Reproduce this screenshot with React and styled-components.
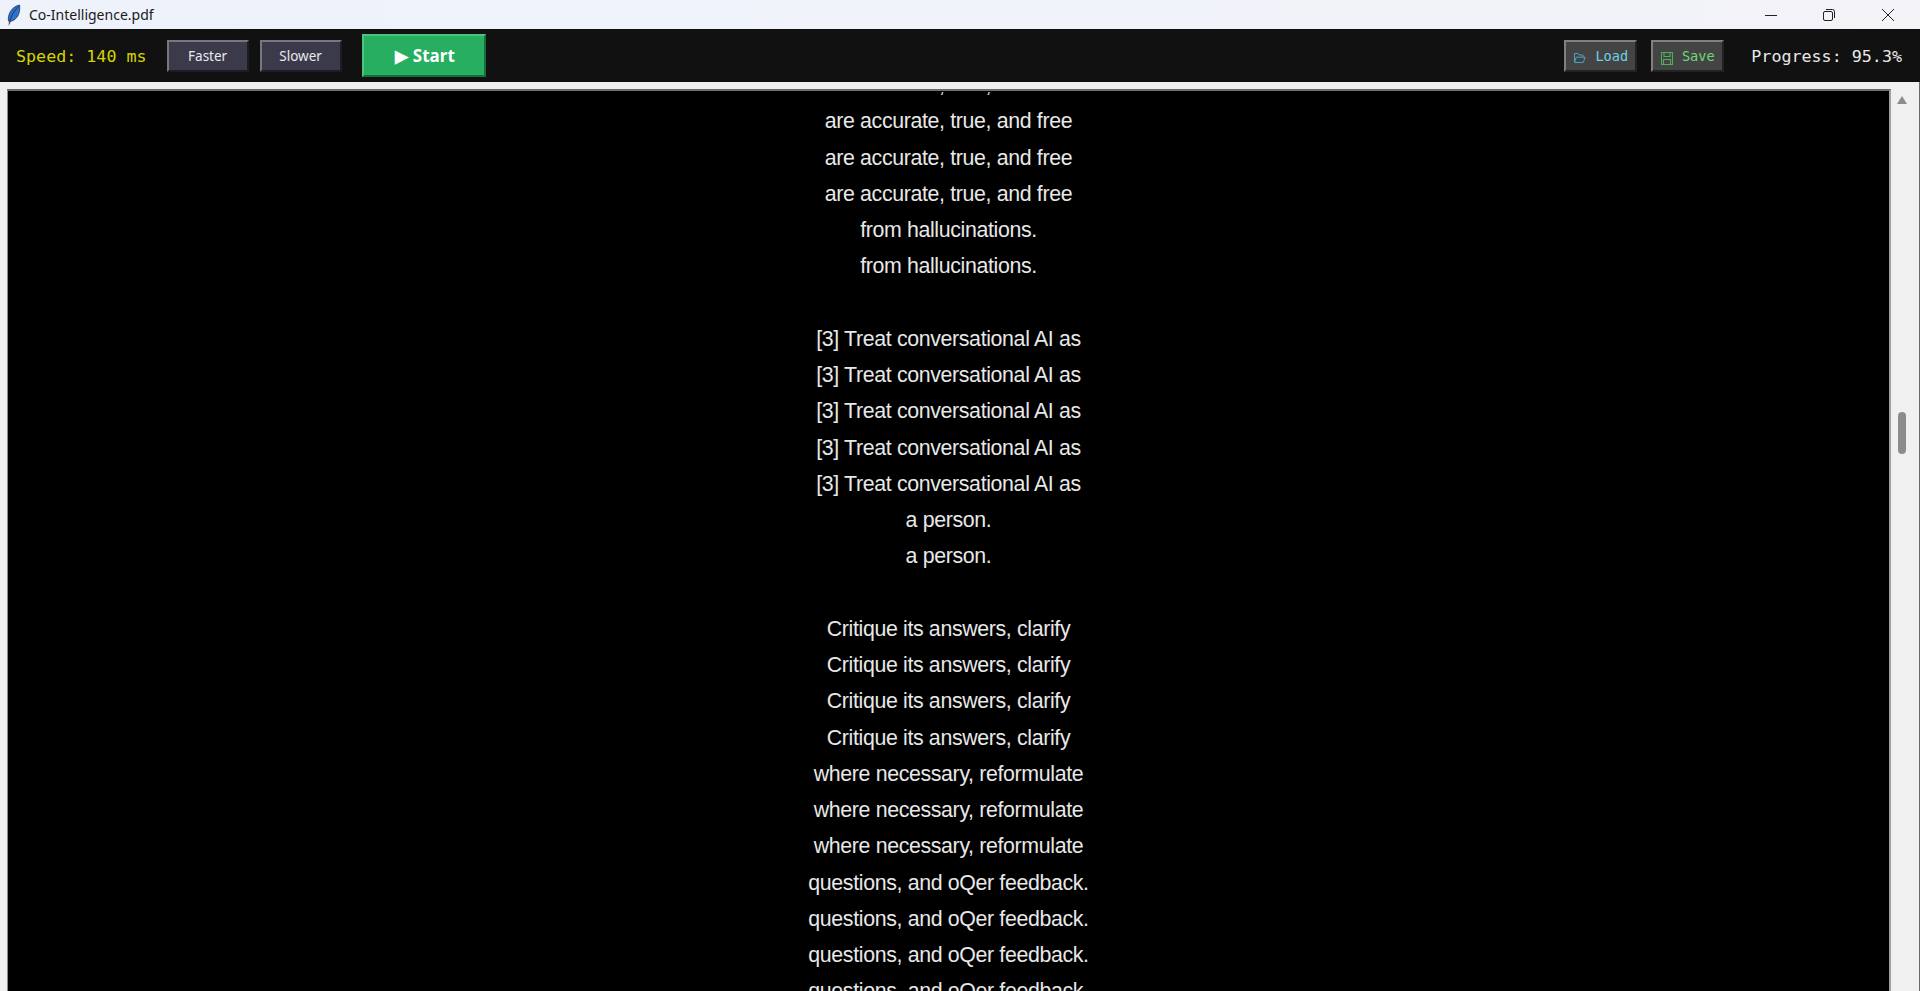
import React from "react";
import styled, { createGlobalStyle } from "styled-components";

const Global = createGlobalStyle`
  html, body { margin: 0; padding: 0; height: 100%; overflow: hidden; background: #f0f0f0; }
  #root { height: 100%; }
`;

const Shell = styled.div`
  height: 991px;
  display: flex;
  flex-direction: column;
  overflow: hidden;
`;

const TitleBar = styled.header`
  height: 29px;
  flex: none;
  display: flex;
  align-items: center;
  padding-left: 5px;
  background: linear-gradient(90deg, #edf2fb 0%, #f0f3fa 50%, #f3f3f8 100%);
`;

const AppName = styled.span`
  margin-left: 6px;
  font: 14px "Noto Sans", "Open Sans", sans-serif;
  color: #1a1a1a;
`;

const WindowControls = styled.div`
  margin-left: auto;
  display: flex;
  height: 100%;
  padding-right: 3px;
`;

const WindowButton = styled.div`
  width: 58.5px;
  display: flex;
  align-items: center;
  justify-content: center;
  color: #222;
`;

const Toolbar = styled.div`
  height: 53px;
  flex: none;
  display: flex;
  align-items: center;
  padding: 0 18px 0 16px;
  background: #111111;
`;

const MonoLabel = styled.span`
  font: 16.7px "DejaVu Sans Mono", monospace;
  color: ${(p) => p.$color};
  white-space: nowrap;
`;

const RaisedButton = styled.div`
  box-sizing: border-box;
  display: flex;
  align-items: center;
  justify-content: center;
  border: 2px solid;
  white-space: nowrap;
`;

const SpeedButton = styled(RaisedButton)`
  width: 82px;
  height: 32px;
  margin-left: ${(p) => p.$gap}px;
  background: #3a3a4a;
  border-color: #77777f #1c1c24 #1c1c24 #77777f;
  color: #e8e8ee;
  font: 13.5px "Noto Sans", "Open Sans", sans-serif;
`;

const StartButton = styled(RaisedButton)`
  width: 124px;
  height: 43px;
  margin-left: 20px;
  padding-left: 3px;
  background: #27ae60;
  border-color: #4cc47f #14703b #14703b #4cc47f;
  color: #ffffff;
  font: 700 17px "Noto Sans", "Open Sans", sans-serif;
`;

const Spacer = styled.div`
  flex: 1;
`;

const FileButton = styled(RaisedButton)`
  width: 73px;
  height: 32px;
  margin-right: ${(p) => p.$gap}px;
  gap: 9px;
  background: #444444;
  border-color: #808080 #222222 #222222 #808080;
  color: ${(p) => p.$color};
  font: 13.6px "DejaVu Sans Mono", monospace;
  svg { margin-top: 5px; }
`;

const Workspace = styled.main`
  flex: 1;
  min-height: 0;
  display: flex;
  background: #f0f0f0;
  border-right: 1px solid #6a6a6a;
`;

const ReaderFrame = styled.section`
  flex: 1;
  min-width: 0;
  display: flex;
  margin: 7px 0 0 7px;
  padding-top: 1px;
  background: #000;
  border-top: 2px solid #6e6e6e;
  border-left: 1px solid #8a8a8a;
  border-right: 2px solid #a0a0a0;
`;

const ReaderViewport = styled.div`
  flex: 1;
  min-width: 0;
  overflow: hidden;
`;

const ReaderText = styled.div`
  margin-top: -${(p) => p.$offset}px;
  text-align: center;
  color: #e8e8e8;
  font: 21.33px/36.25px "Liberation Sans", Arial, sans-serif;
  letter-spacing: -0.35px;
`;

const Line = styled.div`
  min-height: 36.25px;
  white-space: nowrap;
`;

const ScrollBar = styled.aside`
  width: 28px;
  flex: none;
  display: flex;
  flex-direction: column;
  align-items: center;
  padding: 14px 6px 0 0;
  box-sizing: border-box;
`;

const ArrowUp = styled.div`
  width: 0;
  height: 0;
  border-left: 5.5px solid transparent;
  border-right: 5.5px solid transparent;
  border-bottom: 8px solid #8d8d8d;
`;

const Thumb = styled.div`
  width: 8px;
  height: 42px;
  margin-top: 308px;
  border-radius: 4px;
  background: #8c8c8c;
`;

const Feather = () => (
  <svg width="18" height="24" viewBox="0 0 18 24">
    <path d="M3.5 18 C2.5 12 6 4 14.5 2 C15.5 7.5 13.5 15 8 17.5 L5 18.5 Z" fill="#2f74cc" stroke="#1d2f4f" strokeWidth="0.8" />
    <path d="M4.5 19 C6 13 9 8 13.5 3.5" fill="none" stroke="#123a78" strokeWidth="1" />
    <path d="M3.5 23 L4 18 L6 18.5 Z" fill="#555" />
  </svg>
);

const MinIcon = () => (
  <svg width="14" height="14" viewBox="0 0 14 14"><path d="M1 7.5 H13" stroke="currentColor" strokeWidth="1" /></svg>
);
const RestoreIcon = () => (
  <svg width="14" height="14" viewBox="0 0 14 14" fill="none" stroke="currentColor" strokeWidth="1">
    <rect x="1.5" y="3.5" width="9" height="9" rx="1.5" />
    <path d="M4 1.5 H10.5 A2 2 0 0 1 12.5 3.5 V10" />
  </svg>
);
const CloseIcon = () => (
  <svg width="14" height="14" viewBox="0 0 14 14" fill="none" stroke="currentColor" strokeWidth="1"><path d="M1 1 L13 13 M13 1 L1 13" /></svg>
);
const FolderIcon = () => (
  <svg width="13" height="12" viewBox="0 0 13 12" fill="none" stroke="#4aa3bd" strokeWidth="1">
    <path d="M1.5 10 V1.5 H5 L6 3 H10 V5" />
    <path d="M1.5 10.5 L3.2 5.2 H12.2 L10.2 10.5 Z" />
  </svg>
);
const SaveIcon = () => (
  <svg width="12" height="13" viewBox="0 0 12 13" fill="none" stroke="#4fae5a" strokeWidth="1.1">
    <path d="M0.5 0.5 H11.5 V12.5 H0.5 Z" />
    <path d="M3 0.5 V4.5 H9 V0.5 M2.5 12.5 V7.5 H9.5 V12.5" />
  </svg>
);

const rep = (t, n) => Array(n).fill(t);
const lines = [
  ...rep("are accurate, true, and free", 4),
  ...rep("from hallucinations.", 2),
  "",
  ...rep("[3] Treat conversational AI as", 5),
  ...rep("a person.", 2),
  "",
  ...rep("Critique its answers, clarify", 4),
  ...rep("where necessary, reformulate", 3),
  ...rep("questions, and oQer feedback.", 4),
];

export default function App() {
  return (
    <Shell>
      <Global />
      <TitleBar>
        <Feather />
        <AppName>Co-Intelligence.pdf</AppName>
        <WindowControls>
          <WindowButton><MinIcon /></WindowButton>
          <WindowButton><RestoreIcon /></WindowButton>
          <WindowButton><CloseIcon /></WindowButton>
        </WindowControls>
      </TitleBar>
      <Toolbar>
        <MonoLabel $color="#d4d400">Speed: 140 ms</MonoLabel>
        <SpeedButton $gap={20}>Faster</SpeedButton>
        <SpeedButton $gap={11}>Slower</SpeedButton>
        <StartButton><span>▶ Start</span></StartButton>
        <Spacer />
        <FileButton $gap={14} $color="#6fd0e8"><FolderIcon />Load</FileButton>
        <FileButton $gap={27} $color="#6fd87a"><SaveIcon />Save</FileButton>
        <MonoLabel $color="#e8e8e8">Progress: 95.3%</MonoLabel>
      </Toolbar>
      <Workspace>
        <ReaderFrame>
          <ReaderViewport>
            <ReaderText $offset={25}>
              {lines.map((l, i) => (
                <Line key={i}>{l}</Line>
              ))}
            </ReaderText>
          </ReaderViewport>
        </ReaderFrame>
        <ScrollBar>
          <ArrowUp />
          <Thumb />
        </ScrollBar>
      </Workspace>
    </Shell>
  );
}
